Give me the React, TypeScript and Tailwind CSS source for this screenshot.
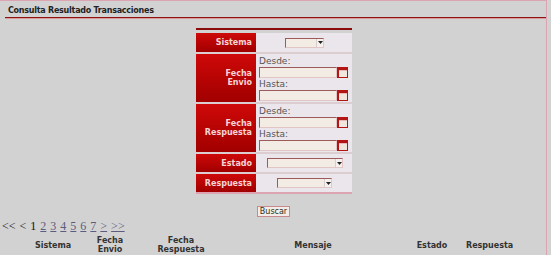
import React from "react";

const labelCell =
  "w-[60px] shrink-0 bg-gradient-to-b from-[#cf0909] to-[#a10000] text-[#f7d4d4] font-bold text-[8px] leading-[9px] text-right pr-[4px] flex flex-col justify-center";

const Select = ({ width }: { width: number }) => (
  <div
    className="h-[10px] flex bg-[#f3ece4] border border-t-[#9c5a5a] border-l-[#9c5a5a] border-b-[#e2c6c6] border-r-[#e2c6c6]"
    style={{ width }}
  >
    <div className="flex-1" />
    <div className="w-[7px] h-full bg-[#f4f1ee] border-l border-[#d8cccc] flex items-center justify-center">
      <svg width="5" height="3" viewBox="0 0 5 3">
        <path d="M0 0 L5 0 L2.5 3 Z" fill="#222" />
      </svg>
    </div>
  </div>
);

const DateInput = () => (
  <div className="flex items-center">
    <div className="w-[78px] h-[11px] bg-[#f3ece4] border border-t-[#9c5a5a] border-l-[#9c5a5a] border-b-[#e2c6c6] border-r-[#e2c6c6]" />
    <svg width="11" height="11" viewBox="0 0 11 11" className="shrink-0">
      <rect x="0" y="0" width="11" height="11" fill="#b31414" />
      <rect x="2" y="3" width="8" height="7" fill="#f1e6de" />
      <rect x="2" y="3" width="8" height="1" fill="#e5b8b8" />
    </svg>
  </div>
);

const DateCell = () => (
  <div className="flex-1 bg-[#ebe6eb] pl-[3px] pt-[2px] text-[9px] leading-[11px] text-[#555] flex flex-col">
    <span>Desde:</span>
    <DateInput />
    <span className="mt-[1px]">Hasta:</span>
    <DateInput />
  </div>
);

export default function App() {
  return (
    <div className="w-[551px] h-[255px] bg-[#d2d2d2] overflow-hidden font-['DejaVu_Sans',sans-serif]">
      <div className="w-[547px] h-full border-t border-r border-[#dba4b0]">
        <div className="pl-[8px] pt-[5px] h-[16px] text-[8px] leading-[9px] font-bold text-[#222] tracking-[-0.25px]">
          Consulta Resultado Transacciones
        </div>
        <div className="ml-[5px] h-[2px] bg-[#8e1212] border-b border-[#d99a9a]" />

        <div className="ml-[196px] w-[156px] mt-[9px]">
          <div className="h-[2px] bg-[#8a0c0c]" />
          <div className="h-[3px]" />
          <div className="flex flex-col gap-[2px] bg-[#dccdd1]">
            <div className="flex h-[19px]">
              <div className={labelCell}>Sistema</div>
              <div className="flex-1 bg-[#ebe6eb] flex items-center pl-[29px]">
                <Select width={39} />
              </div>
            </div>
            <div className="flex h-[48px]">
              <div className={labelCell}>
                <span>Fecha</span>
                <span>Envio</span>
              </div>
              <DateCell />
            </div>
            <div className="flex h-[48px]">
              <div className={labelCell}>
                <span>Fecha</span>
                <span>Respuesta</span>
              </div>
              <DateCell />
            </div>
            <div className="flex h-[18px]">
              <div className={labelCell}>Estado</div>
              <div className="flex-1 bg-[#ebe6eb] flex items-center pl-[11px]">
                <Select width={76} />
              </div>
            </div>
            <div className="flex h-[18px]">
              <div className={labelCell}>Respuesta</div>
              <div className="flex-1 bg-[#ebe6eb] flex items-center pl-[21px]">
                <Select width={55} />
              </div>
            </div>
          </div>
          <div className="h-[2px] bg-[#dba4b0]" />
        </div>

        <div className="ml-[257px] mt-[12px] w-[33px] h-[11px] bg-[#f4ece8] border border-[#c88a8a] text-[8px] leading-[9px] text-[#223322] text-center">
          Buscar
        </div>

        <div className="pl-[2px] mt-[3px] h-[13px] font-['Liberation_Serif',serif] text-[12px] leading-[13px] text-[#111] flex gap-[4px]">
          <span>&lt;&lt;</span>
          <span>&lt;</span>
          <span>1</span>
          {["2", "3", "4", "5", "6", "7", ">", ">>"].map((p) => (
            <span key={p} className="underline text-[#5c5c80]">
              {p}
            </span>
          ))}
        </div>

        <div className="pl-[20px] mt-[3px] flex items-center text-[8px] leading-[9px] font-bold text-[#333] text-center">
          <div className="w-[66px]">Sistema</div>
          <div className="w-[48px]">
            Fecha
            <br />
            Envio
          </div>
          <div className="w-[94px]">
            Fecha
            <br />
            Respuesta
          </div>
          <div className="w-[170px]">Mensaje</div>
          <div className="w-[68px]">Estado</div>
          <div className="w-[46px]">Respuesta</div>
        </div>
      </div>
    </div>
  );
}
